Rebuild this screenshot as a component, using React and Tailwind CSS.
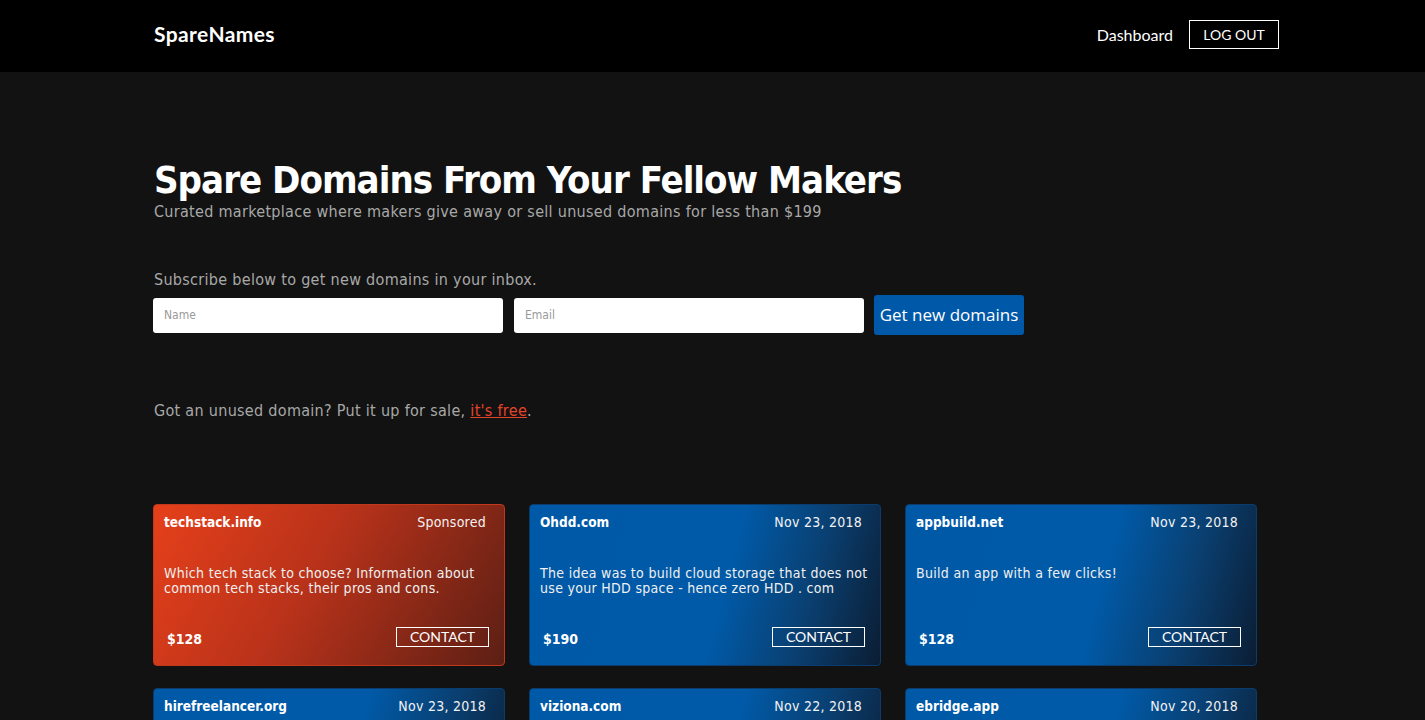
const cards = [
  { name: 'techstack.info', meta: 'Sponsored', desc: 'Which tech stack to choose? Information about common tech stacks, their pros and cons.', price: '$128', sponsored: true },
  { name: 'Ohdd.com', meta: 'Nov 23, 2018', desc: 'The idea was to build cloud storage that does not use your HDD space - hence zero HDD . com', price: '$190' },
  { name: 'appbuild.net', meta: 'Nov 23, 2018', desc: 'Build an app with a few clicks!', price: '$128' },
  { name: 'hirefreelancer.org', meta: 'Nov 23, 2018', desc: 'Find a freelancer for your next project.', price: '$99' },
  { name: 'viziona.com', meta: 'Nov 22, 2018', desc: 'Vision and planning for small teams.', price: '$150' },
  { name: 'ebridge.app', meta: 'Nov 20, 2018', desc: 'Bridge your apps together.', price: '$75' },
]

function DomainCard({ card }) {
  const bg = card.sponsored
    ? 'bg-[linear-gradient(120deg,#e6401a_0%,#b8321a_45%,#5c1f14_100%)] border-[#c0391c]'
    : 'bg-[linear-gradient(105deg,#0059a6_0%,#005aa8_55%,#0a3f70_78%,#0b1d33_100%)] border-[#0a3c6e]'
  return (
    <div className={`h-[162px] rounded-[4px] border ${bg} flex flex-col pl-[10px] pr-[6px] pt-[7px] pb-[18px] text-white`}>
      <div className="flex items-center justify-between pr-[12px]">
        <span className="text-[13.5px] font-bold">{card.name}</span>
        <span className="text-[14px] tracking-[0.25px] text-[#f2f2f2]">{card.meta}</span>
      </div>
      <p className="mt-[33px] text-[14px] leading-[15px] tracking-[0.3px] text-[#f0f0f0]">{card.desc}</p>
      <div className="mt-auto flex items-end justify-between pl-[3px] pr-[9px]">
        <span className="text-[14px] font-bold leading-none mb-[1px]">{card.price}</span>
        <button className="w-[93px] h-[20px] border border-white font-['Lato',sans-serif] text-[14px] leading-none text-white">
          CONTACT
        </button>
      </div>
    </div>
  )
}

export default function App() {
  return (
    <div className="min-h-screen bg-[#121212] font-['DejaVu_Sans_Condensed','DejaVu_Sans',sans-serif]">
      <header className="h-[72px] bg-black pl-[154px] pr-[146px] pb-[4px] flex items-center justify-between font-['Lato',sans-serif] text-white">
        <span className="text-[21px] font-bold tracking-[0.4px]">SpareNames</span>
        <nav className="flex items-center gap-[16px]">
          <span className="text-[16px] mt-[2px]">Dashboard</span>
          <button className="w-[90px] h-[29px] border border-white text-[14px]">LOG OUT</button>
        </nav>
      </header>

      <main className="pl-[153px] pr-[146px] pt-[86px]">
        <h1 className="pl-[1px] text-[38px] font-bold leading-[44px] text-white tracking-[-1px]">
          Spare Domains From Your Fellow Makers
        </h1>
        <p className="pl-[1px] text-[16px] leading-[20px] tracking-[0.3px] text-[#a8a8a8]">
          Curated marketplace where makers give away or sell unused domains for less than $199
        </p>

        <p className="pl-[1px] mt-[48px] text-[16px] leading-[20px] tracking-[0.3px] text-[#a8a8a8]">
          Subscribe below to get new domains in your inbox.
        </p>
        <form className="mt-[5px] flex items-center" onSubmit={(e) => e.preventDefault()}>
          <input
            placeholder="Name"
            className="w-[350px] h-[35px] rounded-[3px] bg-white px-[11px] text-[12px] text-black placeholder:text-[#9a9a9a] outline-none"
          />
          <input
            placeholder="Email"
            className="ml-[11px] w-[350px] h-[35px] rounded-[3px] bg-white px-[11px] text-[12px] text-black placeholder:text-[#9a9a9a] outline-none"
          />
          <button className="ml-[10px] w-[150px] h-[40px] rounded-[3px] bg-[#0059a8] text-white text-[17px] font-['Open_Sans',sans-serif]">
            Get new domains
          </button>
        </form>

        <p className="pl-[1px] mt-[66px] text-[16px] leading-[20px] tracking-[0.3px] text-[#a8a8a8]">
          Got an unused domain? Put it up for sale,{' '}
          <a href="#" className="text-[#e4452a] underline">it's free</a>.
        </p>

        <section className="mt-[83px] grid grid-cols-[352px_352px_352px] gap-x-[24px] gap-y-[22px] pb-[40px]">
          {cards.map((c) => (
            <DomainCard key={c.name} card={c} />
          ))}
        </section>
      </main>
    </div>
  )
}
